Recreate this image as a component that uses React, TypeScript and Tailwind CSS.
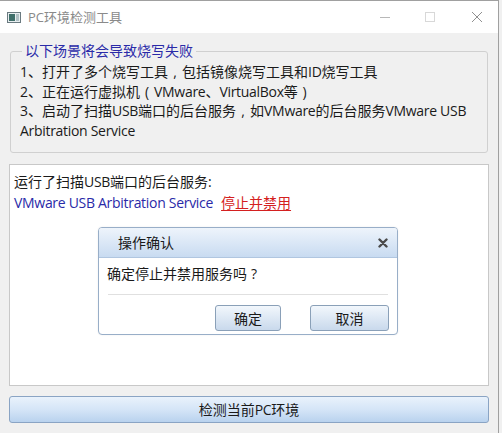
import React from "react";

const font = { fontFamily: '"Open Sans", "Noto Sans CJK SC", sans-serif' };

function L({ children }: { children: React.ReactNode }) {
  return <span className="tracking-[-0.3px]">{children}</span>;
}

function P({ children }: { children: React.ReactNode }) {
  return <span className="inline-block w-[14px] text-center">{children}</span>;
}

export default function App() {
  return (
    <div className="w-[502px] h-[433px] bg-[#f0f0f0] overflow-hidden" style={font}>
      <div className="w-[499px] h-[433px] border-t border-r border-[#a0a0a0] bg-[#f0f0f0] flex flex-col relative">
        {/* title bar */}
        <div className="h-[32px] bg-white flex items-center shrink-0">
          <svg width="14" height="11" viewBox="0 0 14 11" className="ml-[7px]">
            <rect x="0.5" y="0.5" width="13" height="10" fill="#e8eef0" stroke="#6a7a80" />
            <rect x="2" y="2" width="6" height="7" fill="#3f6f6a" />
            <rect x="9" y="2" width="3" height="7" fill="#b0c0c4" />
          </svg>
          <span className="ml-[7px] text-[13px] text-[#8a8a8a] leading-none">PC环境检测工具</span>
          <div className="ml-auto flex items-center h-full">
            <svg width="12" height="12" viewBox="0 0 12 12" className="mr-[33px]">
              <line x1="1" y1="6.5" x2="11" y2="6.5" stroke="#b8b8b8" strokeWidth="1" />
            </svg>
            <svg width="12" height="12" viewBox="0 0 12 12" className="mr-[35px]">
              <rect x="1.5" y="1.5" width="9" height="9" fill="none" stroke="#d8d8d8" strokeWidth="1" />
            </svg>
            <svg width="12" height="12" viewBox="0 0 12 12" className="mr-[15px]">
              <path d="M1 1 L11 11 M11 1 L1 11" stroke="#909090" strokeWidth="1" />
            </svg>
          </div>
        </div>

        {/* group box */}
        <div className="relative mx-[10px] mt-[18px] border border-[#d0d0d0] rounded-[3px] h-[102px] pt-[10px] pl-[9px] text-[14px] leading-[19.5px] text-[#1a1a1a]">
          <span className="absolute -top-[10px] left-[11px] px-[3px] bg-[#f0f0f0] text-[#2a2aa8] text-[14px] leading-[18px]">
            以下场景将会导致烧写失败
          </span>
          <div>1、打开了多个烧写工具<P>,</P>包括镜像烧写工具和<L>ID</L>烧写工具</div>
          <div>2、正在运行虚拟机<P>(</P><L>VMware</L>、<L>VirtualBox</L>等<P>)</P></div>
          <div>3、启动了扫描<L>USB</L>端口的后台服务<P>,</P>如<L>VMware</L>的后台服务<L>VMware USB</L></div>
          <div><L>Arbitration Service</L></div>
        </div>

        {/* white area */}
        <div className="relative mx-[9px] mt-[11px] h-[222px] bg-white border border-[#c8c8c8] pl-[4px] pt-[6px] text-[14px] leading-[21px]">
          <div className="text-[#1a1a1a]">运行了扫描<L>USB</L>端口的后台服务:</div>
          <div>
            <span className="text-[#2a2aa8]"><L>VMware USB Arbitration Service</L></span>
            <span className="ml-[8px] text-[#d42020] underline underline-offset-2">停止并禁用</span>
          </div>

          {/* dialog */}
          <div className="absolute left-[88px] top-[62px] w-[300px] h-[108px] bg-white border border-[#98aec8] rounded-[4px] overflow-hidden shadow-[0_0_2px_rgba(0,0,0,0.08)]">
            <div className="h-[30px] bg-gradient-to-b from-[#eef4fb] to-[#c8dbf1] border-b border-[#b0c6e0] flex items-center pl-[19px] pr-[9px]">
              <span className="text-[14px] text-[#1a1a1a]">操作确认</span>
              <svg width="10" height="10" viewBox="0 0 10 10" className="ml-auto">
                <path d="M1.5 1.5 L8.5 8.5 M8.5 1.5 L1.5 8.5" stroke="#4a4a4a" strokeWidth="2.4" strokeLinecap="round" />
              </svg>
            </div>
            <div className="px-[8px]">
              <div className="h-[36px] flex items-center pb-[5px] text-[14px] text-[#1a1a1a]">确定停止并禁用服务吗<P>?</P></div>
              <div className="border-t border-[#e0e0e0] mx-[1px]" />
              <div className="flex justify-end gap-[29px] pt-[10px]">
                <button className="w-[66px] h-[26px] rounded-[3px] border border-[#8aa0b8] bg-gradient-to-b from-[#f2f7fc] to-[#c9d9ec] text-[14px] text-[#1a1a1a]">确定</button>
                <button className="w-[79px] h-[26px] rounded-[3px] border border-[#8aa0b8] bg-gradient-to-b from-[#f2f7fc] to-[#c9d9ec] text-[14px] text-[#1a1a1a]">取消</button>
              </div>
            </div>
          </div>
        </div>

        {/* bottom button */}
        <button className="mx-[9px] mt-[10px] h-[27px] rounded-[3px] border border-[#8aa4c4] bg-gradient-to-b from-[#e9f2fc] via-[#d5e5f7] to-[#b9d2ee] text-[14px] text-[#1a1a1a] flex items-center justify-center">
          检测当前<L>PC</L>环境
        </button>
      </div>
    </div>
  );
}
